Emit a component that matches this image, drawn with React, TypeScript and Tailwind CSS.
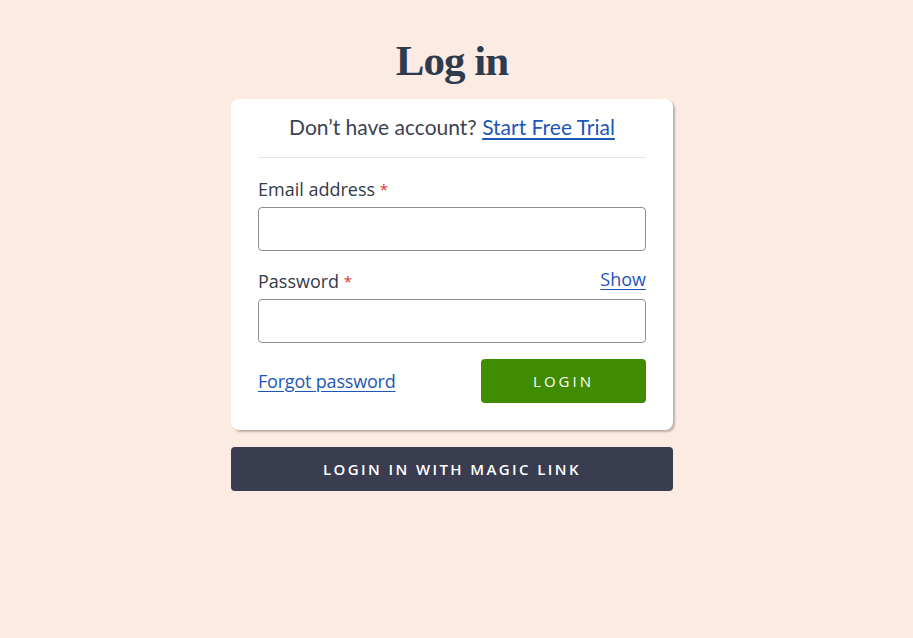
import React, { useState } from 'react';

export default function App() {
  const [showPassword, setShowPassword] = useState(false);

  return (
    <div className="min-h-[638px] w-full bg-[#fcebe2] pr-[9px] font-['Open_Sans',sans-serif]">
      <div className="mx-auto flex w-[442px] flex-col pt-[36px]">
        <h1 className="text-center font-['Liberation_Serif',serif] text-[43px] font-bold leading-[50px] tracking-[-1px] text-[#2e3a4e]">
          Log in
        </h1>

        <div className="mt-[13px] rounded-[8px] bg-white px-[27px] pb-[27px] pt-[14px] shadow-[2px_2px_2px_rgba(120,105,95,0.45)]">
          <p className="text-center font-['Lato',sans-serif] text-[21px] leading-[28px] text-[#3d4251]">
            Don’t have account?{' '}
            <a href="#" className="text-[#1e56b8] underline underline-offset-[3px]">
              Start Free Trial
            </a>
          </p>
          <div className="mt-[16px] border-t border-[#e3e3e6]" />

          <label className="mt-[17px] block text-[18px] leading-[28px] text-[#343a4a]">
            Email address <span className="align-top text-[15px] text-[#e0333a]">*</span>
          </label>
          <input
            type="email"
            className="mt-[4px] block h-[44px] w-full rounded-[4px] border border-[#8e8e8e] bg-white px-3 outline-none"
          />

          <div className="mt-[16px] flex h-[28px] items-center justify-between">
            <label className="text-[18px] leading-[28px] text-[#343a4a]">
              Password <span className="align-top text-[15px] text-[#e0333a]">*</span>
            </label>
            <button
              type="button"
              onClick={() => setShowPassword(!showPassword)}
              className="-mt-[4px] text-[18px] leading-[24px] text-[#1e56b8] underline underline-offset-[3px]"
            >
              Show
            </button>
          </div>
          <input
            type={showPassword ? 'text' : 'password'}
            className="mt-[4px] block h-[44px] w-full rounded-[4px] border border-[#8e8e8e] bg-white px-3 outline-none"
          />

          <div className="mt-[16px] flex items-center justify-between">
            <a href="#" className="text-[18px] tracking-[-0.2px] text-[#1e56b8] underline underline-offset-[3px]">
              Forgot password
            </a>
            <button className="h-[44px] w-[165px] rounded-[4px] bg-[#3f8c00] text-[15px] font-medium tracking-[3px] text-white">
              LOGIN
            </button>
          </div>
        </div>

        <button className="mt-[17px] h-[44px] w-full rounded-[4px] bg-[#3a3d50] text-[15px] font-semibold tracking-[2.4px] text-white">
          LOGIN IN WITH MAGIC LINK
        </button>
      </div>
    </div>
  );
}
